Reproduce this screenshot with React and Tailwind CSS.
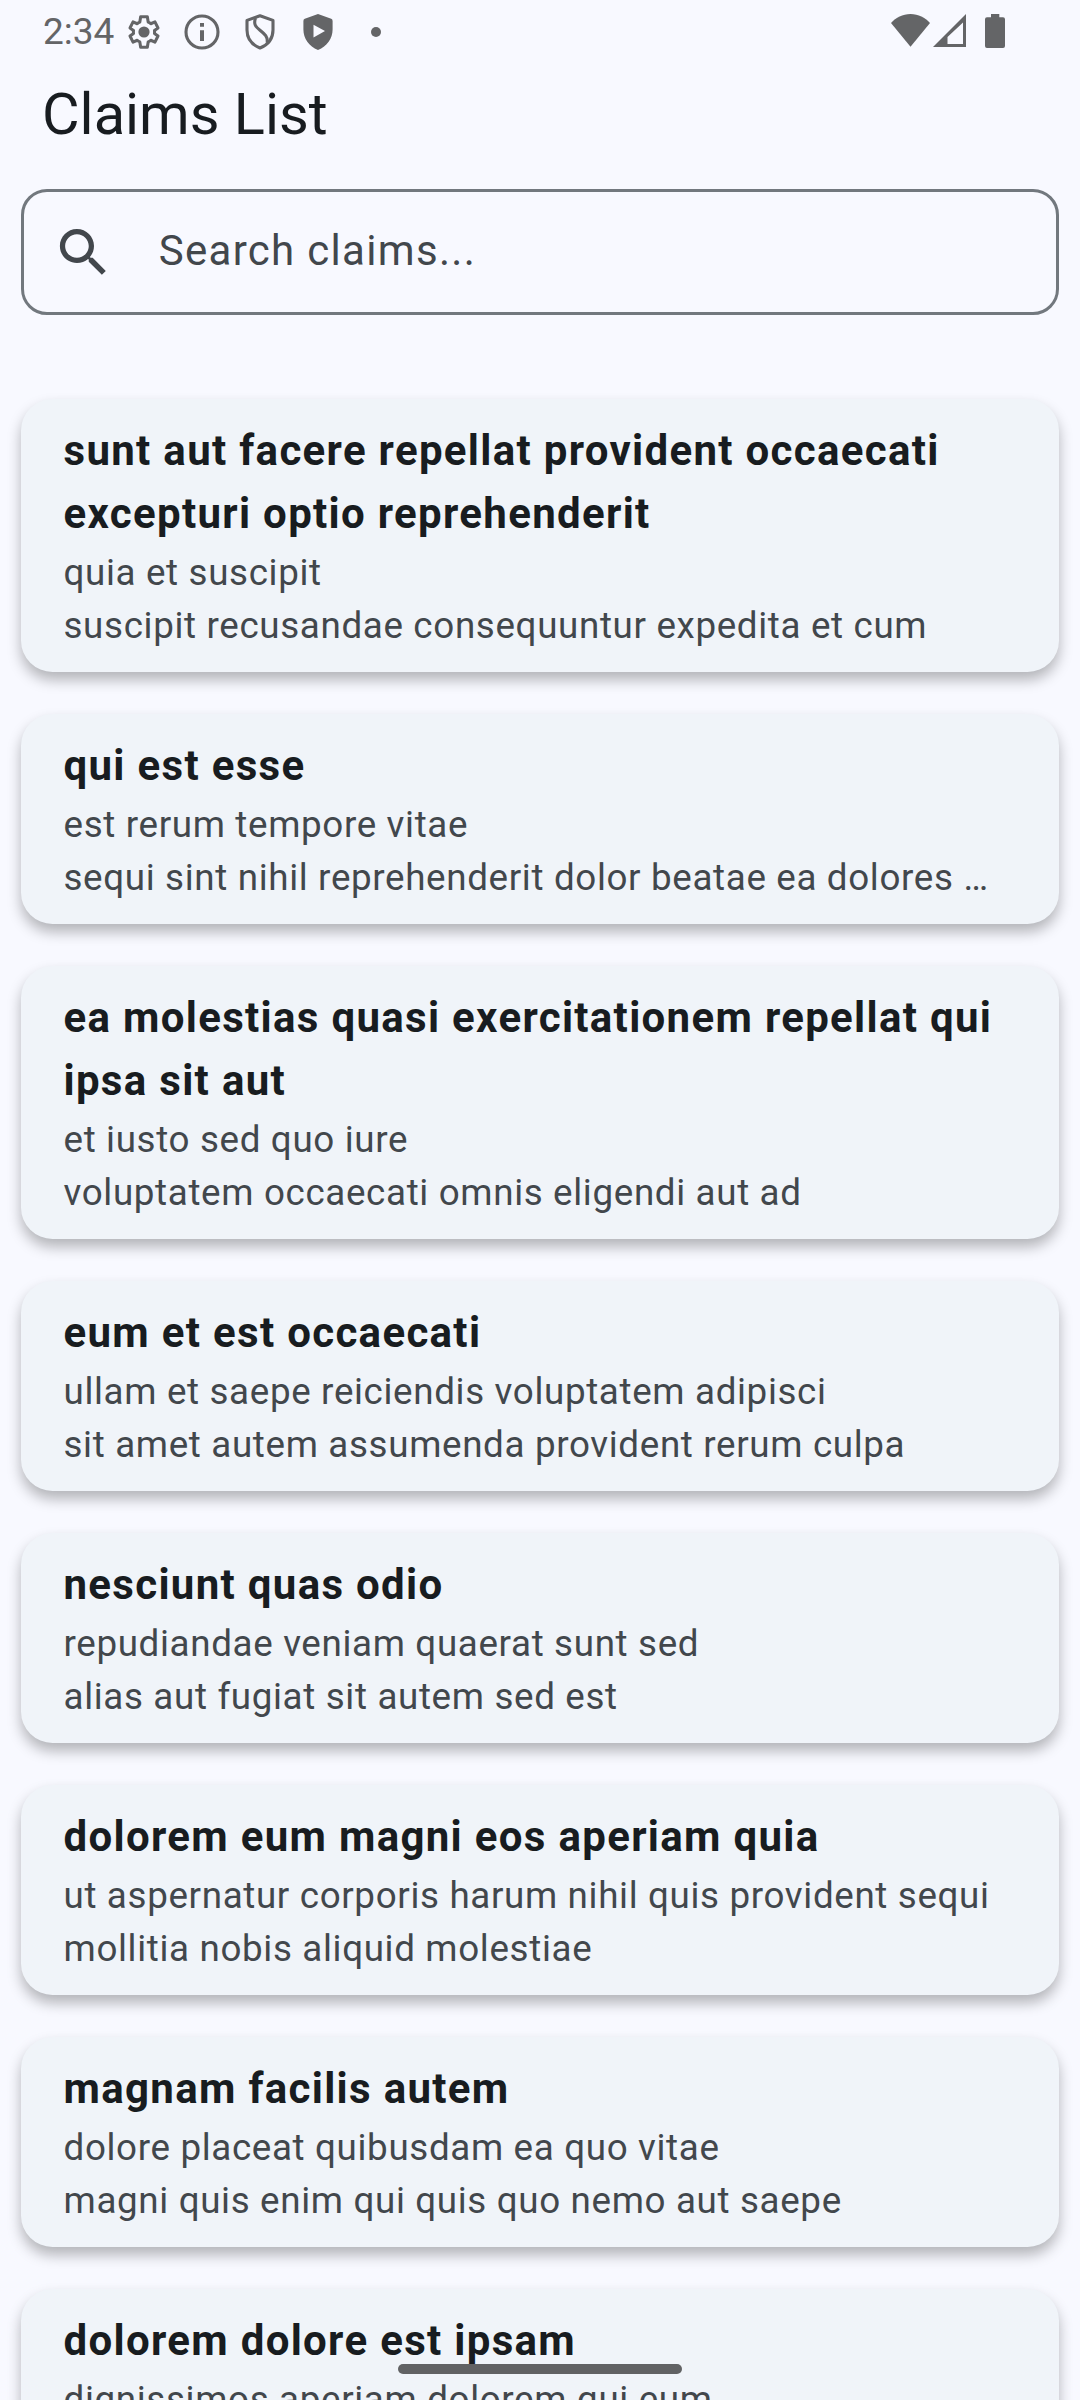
const claims = [
  { title: ["sunt aut facere repellat provident occaecati", "excepturi optio reprehenderit"], body: ["quia et suscipit", "suscipit recusandae consequuntur expedita et cum"] },
  { title: ["qui est esse"], body: ["est rerum tempore vitae", "sequi sint nihil reprehenderit dolor beatae ea dolores …"] },
  { title: ["ea molestias quasi exercitationem repellat qui", "ipsa sit aut"], body: ["et iusto sed quo iure", "voluptatem occaecati omnis eligendi aut ad"] },
  { title: ["eum et est occaecati"], body: ["ullam et saepe reiciendis voluptatem adipisci", "sit amet autem assumenda provident rerum culpa"] },
  { title: ["nesciunt quas odio"], body: ["repudiandae veniam quaerat sunt sed", "alias aut fugiat sit autem sed est"] },
  { title: ["dolorem eum magni eos aperiam quia"], body: ["ut aspernatur corporis harum nihil quis provident sequi", "mollitia nobis aliquid molestiae"] },
  { title: ["magnam facilis autem"], body: ["dolore placeat quibusdam ea quo vitae", "magni quis enim qui quis quo nemo aut saepe"] },
  { title: ["dolorem dolore est ipsam"], body: ["dignissimos aperiam dolorem qui eum"] },
];

function GearIcon() {
  return (
    <svg className="w-[34px] h-[36px]" viewBox="-17 -18 34 36" fill="none">
      <path
        transform="scale(1.52) translate(-12 -12)"
        stroke="currentColor"
        strokeWidth="2"
        strokeLinejoin="round"
        d="M18.9 12.98c.04-.32.07-.64.07-.98 0-.34-.03-.66-.07-.98l2.31-1.65-2-4-2.77 1.2c-.52-.5-1.08-.83-1.69-1.08L14.2 2H9.8l-.55 3.49c-.61.25-1.17.58-1.69 1.08l-2.77-1.2-2 4 2.31 1.65c-.04.32-.07.65-.07.98 0 .33.03.66.07.98l-2.31 1.65 2 4 2.77-1.2c.52.5 1.08.83 1.69 1.08L9.8 22h4.4l.55-3.49c.61-.25 1.17-.58 1.69-1.08l2.77 1.2 2-4z"
      />
      <circle r="5.6" fill="currentColor" />
    </svg>
  );
}

function InfoIcon() {
  return (
    <svg className="w-[36px] h-[36px]" viewBox="-18 -18 36 36" fill="none">
      <circle r="16" stroke="currentColor" strokeWidth="3.1" />
      <path d="M-2 -9h4v3.7h-4zM-2 -1.8h4V9h-4z" fill="currentColor" />
    </svg>
  );
}

function ShieldSwirlIcon() {
  return (
    <svg className="w-[30px] h-[36px]" viewBox="0 0 30 36" fill="none" stroke="currentColor" strokeWidth="3.1" strokeLinejoin="round">
      <path d="M15 1.8 28 6.4V16c0 8.200-4.500 14.600-13 18C6.500 30.600 2 24.200 2 16V6.400Z" />
      <path d="M10.500 4c-2.300 6.500.5 9 4.500 12.200 5 4 7.800 6.500 7.200 12.300" />
    </svg>
  );
}

function ShieldPlayIcon() {
  return (
    <svg className="w-[30px] h-[36px]" viewBox="0 0 30 36">
      <path
        fill="currentColor"
        fillRule="evenodd"
        d="M15 0 28.200 4.800Q29.600 5.300 29.600 7v8.500C29.600 24.500 24 32.500 15 36 6 32.500.4 24.500.4 15.500V7Q.4 5.300 1.800 4.800ZM10.500 10.800v12.600L22 17.100Z"
      />
    </svg>
  );
}

function WifiIcon() {
  return (
    <svg className="w-[39px] h-[33px]" viewBox="0 0 39 33" fill="currentColor">
      <path d="M19.500 32.700 0 9C5 3.500 11.500 0 19.500 0S34 3.500 39 9Z" />
    </svg>
  );
}

function SignalIcon() {
  return (
    <svg className="w-[33px] h-[33px]" viewBox="0 0 33 33" fill="currentColor">
      <path fillRule="evenodd" d="M33 0v33H0ZM30 8.500 14.500 23v7H30Z" />
    </svg>
  );
}

function BatteryIcon() {
  return (
    <svg className="w-[20px] h-[34px]" viewBox="0 0 20 34" fill="currentColor">
      <path d="M6 0h8.300v3.300H18q2 0 2 2V32q0 2-2 2H2q-2 0-2-2V5.300q0-2 2-2h4Z" />
    </svg>
  );
}

function StatusBar() {
  return (
    <div className="flex h-[63px] shrink-0 items-center text-[#646567] pl-[43px] pr-[75px]">
      <span className="w-[84px] text-[37px] leading-[43px]">2:34</span>
      <GearIcon />
      <div className="ml-[23px] flex"><InfoIcon /></div>
      <div className="ml-[25px] flex"><ShieldSwirlIcon /></div>
      <div className="ml-[27.500px] flex"><ShieldPlayIcon /></div>
      <span className="ml-[38.500px] size-[10px] rounded-full bg-[#646567]" />
      <div className="mb-px ml-auto flex items-start">
        <WifiIcon />
        <div className="ml-[3.500px]"><SignalIcon /></div>
        <div className="ml-[19px]"><BatteryIcon /></div>
      </div>
    </div>
  );
}

function SearchField() {
  return (
    <div className="mx-[21px] mt-[21px] flex h-[126px] shrink-0 items-center rounded-[26px] border-[3px] border-[#72787e] text-[#42474c]">
      <svg className="ml-[28px] size-[63px]" viewBox="0 0 24 24" fill="currentColor">
        <path d="M15.500 14h-.79l-.28-.27C15.410 12.590 16 11.110 16 9.500 16 5.910 13.090 3 9.500 3S3 5.910 3 9.500 5.910 16 9.500 16c1.610 0 3.090-.59 4.230-1.570l.27.28v.79l5 4.990L20.490 19l-4.990-5zm-6 0C7.010 14 5 11.990 5 9.500S7.010 5 9.500 5 14 7.010 14 9.500 11.990 14 9.500 14z" />
      </svg>
      <span className="mb-[4px] ml-[43.650px] text-[42px] leading-[63px] tracking-[1.3125px]">Search claims...</span>
    </div>
  );
}

function ClaimCard({ title, body }) {
  return (
    <article className="shrink-0 rounded-[31.500px] bg-[#f0f4f9] pl-[42.500px] pr-[42px] pt-[20px] pb-[20px] shadow-[0_8px_14px_rgba(0,0,0,0.280)]">
      <h2 className="text-[42px] font-bold leading-[63px] tracking-[1.3125px] text-[#181c20]">
        {title.map((line) => <span key={line} className="block whitespace-nowrap">{line}</span>)}
      </h2>
      <p className="pt-[2px] text-[36.750px] leading-[52.500px] tracking-[0.65625px] text-[#42474c]">
        {body.map((line) => <span key={line} className="block whitespace-nowrap">{line}</span>)}
      </p>
    </article>
  );
}

export default function App() {
  return (
    <div className="relative flex h-[2400px] w-[1080px] flex-col overflow-hidden bg-[#f8f9ff] font-['Roboto',sans-serif]">
      <StatusBar />
      <header className="flex h-[105px] shrink-0 items-center px-[42px] pb-[2px]">
        <h1 className="text-[57.750px] leading-[73.500px] text-[#181c20]">Claims List</h1>
      </header>
      <SearchField />
      <main className="mt-[84px] flex shrink-0 flex-col gap-[42px] px-[21px]">
        {claims.map((claim) => <ClaimCard key={claim.title[0]} {...claim} />)}
      </main>
      <div className="absolute bottom-[26px] left-[398px] h-[10px] w-[284px] rounded-full bg-[#616264]" />
    </div>
  );
}
